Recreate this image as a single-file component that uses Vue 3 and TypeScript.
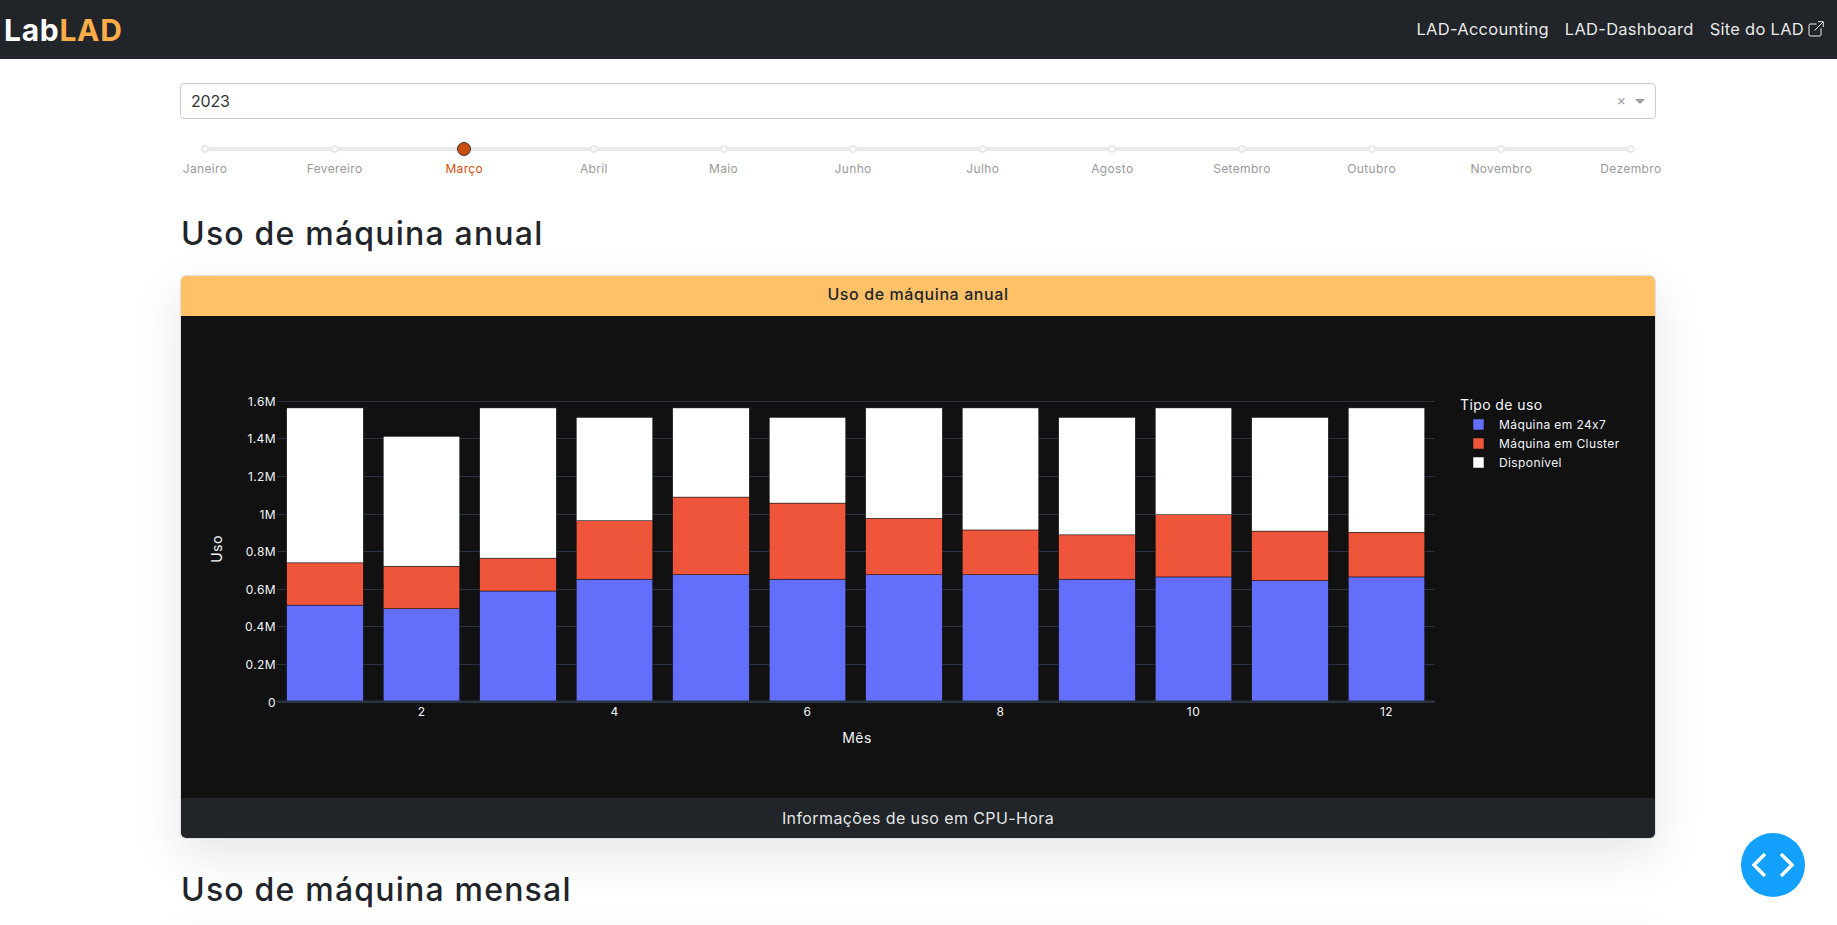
<template>
  <div class="page">
    <nav class="navbar">
      <a class="brand">Lab<span class="brand-accent">LAD</span></a>
      <div class="nav-links">
        <a class="nav-link">LAD-Accounting</a>
        <a class="nav-link">LAD-Dashboard</a>
        <a class="nav-link">
          Site do LAD
          <svg class="external" viewBox="0 0 16 16" width="16" height="16" aria-hidden="true">
            <path d="M8.600 3H2.200C1.500 3 1 3.500 1 4.200v9.600c0 .7.5 1.200 1.200 1.200h9.600c.7 0 1.200-.5 1.200-1.200V7.400" fill="none" stroke="currentColor" stroke-width="1" />
            <path d="M6.500 9.500 15 1M10 .7h5.300V6" fill="none" stroke="currentColor" stroke-width="1" />
          </svg>
        </a>
      </div>
    </nav>

    <main class="container">
      <div class="select">
        <span class="select-value">2023</span>
        <span class="select-clear">×</span>
        <span class="select-caret"></span>
      </div>

      <div class="slider">
        <div class="rail">
          <span
            v-for="(month, i) in months"
            :key="month"
            class="dot"
            :class="{ active: i === selectedMonth }"
          ></span>
        </div>
        <div class="marks">
          <span
            v-for="(month, i) in months"
            :key="month"
            class="mark"
            :class="{ active: i === selectedMonth }"
          ><span>{{ month }}</span></span>
        </div>
      </div>

      <h2 class="title">Uso de máquina anual</h2>
      <section class="card">
        <header class="card-header">Uso de máquina anual</header>
        <svg class="chart" viewBox="0 0 1474 482" width="1474" height="482">
          <g v-for="tick in yTicks" :key="tick.label">
            <line :x1="plotLeft" :x2="plotRight" :y1="tick.y" :y2="tick.y" class="grid" />
            <text :x="plotLeft - 1" :y="tick.y + 4" text-anchor="end" class="tick">{{ tick.label }}</text>
          </g>
          <g v-for="bar in bars" :key="bar.x">
            <rect v-for="seg in bar.segments" :key="seg.fill" :x="bar.x" :y="seg.y" :width="barWidth" :height="seg.h" :fill="seg.fill" class="bar" />
          </g>
          <line :x1="plotLeft" :x2="plotRight" :y1="zeroY" :y2="zeroY" class="zero" />
          <text v-for="tick in xTicks" :key="tick.label" :x="tick.x" :y="zeroY + 14" text-anchor="middle" class="tick">{{ tick.label }}</text>
          <text x="0" y="0" text-anchor="middle" class="axis-title" transform="translate(41 233) rotate(-90)">Uso</text>
          <text x="676" y="427" text-anchor="middle" class="axis-title">Mês</text>

          <text x="1279" y="94" class="axis-title">Tipo de uso</text>
          <g v-for="(item, i) in legend" :key="item.label">
            <rect x="1292" :y="103 + i * 19" width="11" height="11" :fill="item.fill" class="bar" />
            <text x="1318" :y="113 + i * 19" class="tick">{{ item.label }}</text>
          </g>
        </svg>
        <footer class="card-footer">Informações de uso em CPU-Hora</footer>
      </section>

      <h2 class="title">Uso de máquina mensal</h2>
      <section class="card card-empty"></section>
    </main>

    <button class="fab" type="button" aria-label="Código">
      <svg viewBox="0 0 42 26" width="42" height="26" aria-hidden="true">
        <path d="M13 2 2 13l11 11M29 2l11 11-11 11" fill="none" stroke="currentColor" stroke-width="3.400" />
      </svg>
    </button>
  </div>
</template>

<script setup lang="ts">
const months = [
  'Janeiro', 'Fevereiro', 'Março', 'Abril', 'Maio', 'Junho',
  'Julho', 'Agosto', 'Setembro', 'Outubro', 'Novembro', 'Dezembro'
]
const selectedMonth = 2

// valores em milhões de CPU-hora, por mês
const usage = [
  { m24: 0.513, cluster: 0.225, total: 1.5624 },
  { m24: 0.494, cluster: 0.226, total: 1.4112 },
  { m24: 0.588, cluster: 0.175, total: 1.5624 },
  { m24: 0.651, cluster: 0.311, total: 1.512 },
  { m24: 0.675, cluster: 0.413, total: 1.5624 },
  { m24: 0.651, cluster: 0.405, total: 1.512 },
  { m24: 0.675, cluster: 0.3, total: 1.5624 },
  { m24: 0.675, cluster: 0.238, total: 1.5624 },
  { m24: 0.651, cluster: 0.236, total: 1.512 },
  { m24: 0.663, cluster: 0.331, total: 1.5624 },
  { m24: 0.644, cluster: 0.263, total: 1.512 },
  { m24: 0.663, cluster: 0.238, total: 1.5624 }
]

const BLUE = '#636efa'
const RED = '#ef553b'
const WHITE = '#ffffff'

const plotLeft = 96
const plotRight = 1254
const zeroY = 385.5
const pxPerMillion = 187.9
const step = 96.5
const barWidth = 76.5
const firstCenter = 144

const yOf = (v: number) => zeroY - v * pxPerMillion

const yTicks = [0, 0.2, 0.4, 0.6, 0.8, 1, 1.2, 1.4, 1.6].map((v) => ({
  y: Math.round(yOf(v)) + 0.5,
  label: v === 0 ? '0' : `${v}M`
}))

const xTicks = [2, 4, 6, 8, 10, 12].map((m) => ({
  x: firstCenter + (m - 1) * step,
  label: String(m)
}))

const bars = usage.map((row, i) => {
  const mid = row.m24 + row.cluster
  return {
    x: firstCenter + i * step - barWidth / 2,
    segments: [
      { y: yOf(row.m24), h: row.m24 * pxPerMillion, fill: BLUE },
      { y: yOf(mid), h: row.cluster * pxPerMillion, fill: RED },
      { y: yOf(row.total), h: (row.total - mid) * pxPerMillion, fill: WHITE }
    ]
  }
})

const legend = [
  { label: 'Máquina em 24x7', fill: BLUE },
  { label: 'Máquina em Cluster', fill: RED },
  { label: 'Disponível', fill: WHITE }
]
</script>

<style scoped>
.page {
  font-family: Inter, "Liberation Sans", sans-serif;
  color: #212529;
  background: #fff;
}

.navbar {
  display: flex;
  align-items: center;
  justify-content: space-between;
  height: 59px;
  padding: 0 13px 0 4px;
  background: #212529;
}

.brand {
  font-size: 30px;
  font-weight: 700;
  color: #fff;
  letter-spacing: 0.7px;
}

.brand-accent {
  color: #ffad4a;
}

.nav-links {
  display: flex;
  gap: 16px;
  margin-top: -2px;
}

.nav-link {
  display: flex;
  align-items: center;
  gap: 4px;
  font-size: 16.5px;
  letter-spacing: 0.27px;
  color: rgba(255, 255, 255, 0.92);
}

.container {
  width: 1476px;
  margin-left: 180px;
  padding-top: 24px;
}

.select {
  display: flex;
  align-items: center;
  height: 36px;
  padding: 0 10px;
  box-sizing: border-box;
  border: 1px solid #ccc;
  border-radius: 4px;
  color: #333;
}

.select-value {
  flex: 1;
  font-size: 16px;
  letter-spacing: -0.2px;
}

.select-clear {
  font-size: 14px;
  color: #999;
  margin-right: 9px;
  margin-top: -4px;
}

.select-caret {
  width: 0;
  height: 0;
  border-left: 5px solid transparent;
  border-right: 5px solid transparent;
  border-top: 5px solid #999;
}

.slider {
  margin-top: 28px;
  padding: 0 25px 5px;
}

.rail {
  display: flex;
  align-items: center;
  justify-content: space-between;
  height: 4px;
  background: #e9e9e9;
  border-radius: 4px;
}

.dot {
  flex: none;
  width: 4px;
  height: 4px;
  margin: 0 -4px;
  background: #fff;
  border: 2px solid #e9e9e9;
  border-radius: 50%;
}

.dot.active {
  width: 12px;
  height: 12px;
  margin: 0 -7px;
  border: 1px solid #333;
  background: #c94f10;
}

.marks {
  display: flex;
  justify-content: space-between;
  margin-top: 9px;
}

.mark {
  display: flex;
  justify-content: center;
  width: 0;
  font-size: 12px;
  line-height: 18px;
  letter-spacing: 0.35px;
  white-space: nowrap;
  color: #999;
}

.mark.active {
  color: #d4500f;
}

.title {
  margin: 32px 0 22px 1px;
  font-size: 32px;
  font-weight: 500;
  line-height: 38px;
  letter-spacing: 1.2px;
}

.card {
  border: 1px solid rgba(0, 0, 0, 0.125);
  border-radius: 6px;
  box-shadow: 0 16px 48px rgba(0, 0, 0, 0.1);
  overflow: hidden;
}

.card-empty {
  height: 400px;
}

.card-header {
  height: 40px;
  line-height: 37px;
  text-align: center;
  font-size: 16px;
  font-weight: 500;
  letter-spacing: 0.6px;
  background: #ffc168;
}

.chart {
  display: block;
  background: #111;
}

.grid,
.zero {
  stroke: #283442;
  stroke-width: 1;
}

.zero {
  stroke-width: 2;
}

.bar {
  stroke: #111;
  stroke-width: 0.5;
}

.tick {
  font-size: 12px;
  letter-spacing: 0.4px;
  fill: #f2f5fa;
}

.axis-title {
  font-size: 14px;
  letter-spacing: 0.4px;
  fill: #f2f5fa;
}

.card-footer {
  height: 40px;
  line-height: 40px;
  text-align: center;
  font-size: 16px;
  letter-spacing: 0.4px;
  color: rgba(255, 255, 255, 0.9);
  background: #212529;
}

.fab {
  position: fixed;
  left: 1741px;
  top: 833px;
  display: flex;
  align-items: center;
  justify-content: center;
  width: 64px;
  height: 64px;
  padding: 0;
  border: none;
  border-radius: 50%;
  color: #fff;
  background: #13a0ff;
}
</style>

<style>
html,
body {
  overflow: hidden;
}
</style>
